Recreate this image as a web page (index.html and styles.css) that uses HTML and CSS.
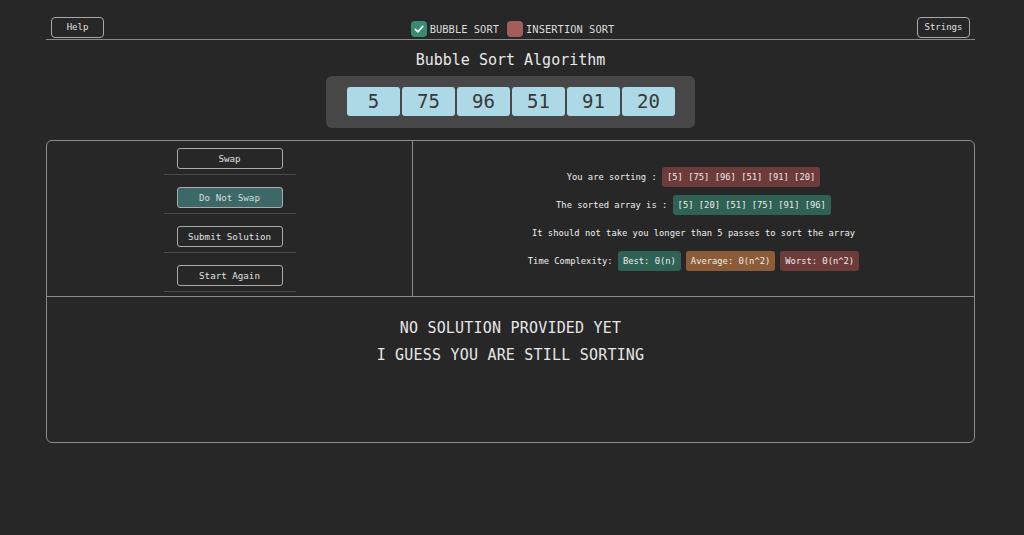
FILE: index.html
```html
<!DOCTYPE html>
<html lang="en">
<head>
<meta charset="utf-8">
<title>Bubble Sort Algorithm</title>
<link rel="stylesheet" href="styles.css">
</head>
<body>
<div class="page">
  <header class="topbar">
    <button class="btn-small">Help</button>
    <div class="toggles">
      <span class="check check-on"><svg viewBox="0 0 16 16" width="16" height="16"><path d="M4.3 8.3 L7 10.8 L11.8 5.4" fill="none" stroke="#fff" stroke-width="1.6" stroke-linecap="round" stroke-linejoin="round"/></svg></span>
      <span class="toggle-label">BUBBLE SORT</span>
      <span class="check check-off"></span>
      <span class="toggle-label">INSERTION SORT</span>
    </div>
    <button class="btn-small">Strings</button>
  </header>

  <h1 class="title">Bubble Sort Algorithm</h1>

  <div class="array-wrap">
    <div class="array">
      <div class="cell">5</div>
      <div class="cell">75</div>
      <div class="cell">96</div>
      <div class="cell">51</div>
      <div class="cell">91</div>
      <div class="cell">20</div>
    </div>
  </div>

  <section class="panel">
    <div class="panel-top">
      <div class="controls">
        <div class="ctrl"><button class="btn">Swap</button></div>
        <div class="ctrl"><button class="btn btn-active">Do Not Swap</button></div>
        <div class="ctrl"><button class="btn">Submit Solution</button></div>
        <div class="ctrl"><button class="btn">Start Again</button></div>
      </div>
      <div class="info">
        <div class="row">You are sorting : <span class="badge red">[5] [75] [96] [51] [91] [20]</span></div>
        <div class="row">The sorted array is : <span class="badge green">[5] [20] [51] [75] [91] [96]</span></div>
        <div class="row">It should not take you longer than 5 passes to sort the array</div>
        <div class="row">Time Complexity: <span class="badge green">Best: Θ(n)</span><span class="badge orange">Average: Θ(n^2)</span><span class="badge red">Worst: Θ(n^2)</span></div>
      </div>
    </div>
    <div class="panel-bottom">
      <p class="msg">NO SOLUTION PROVIDED YET</p>
      <p class="msg">I GUESS YOU ARE STILL SORTING</p>
    </div>
  </section>
</div>
</body>
</html>
```

FILE: styles.css
```css
* { box-sizing: border-box; }
html, body {
  margin: 0;
  padding: 0;
  background: #272727;
  color: #e4e4e4;
  font-family: "DejaVu Sans Mono", "Liberation Mono", monospace;
}
.page {
  width: 929px;
  margin-left: 46px;
}
.topbar {
  display: flex;
  justify-content: space-between;
  align-items: flex-end;
  padding: 17px 5px 1px 5px;
  border-bottom: 1px solid #8a8a8a;
}
.btn-small {
  font-family: inherit;
  font-size: 9px;
  color: #e0e0e0;
  background: transparent;
  border: 1px solid #a9a9a9;
  border-radius: 4px;
  width: 53px;
  height: 21px;
  padding: 0;
  line-height: 19px;
  text-align: center;
}
.toggles {
  display: flex;
  align-items: center;
  padding-bottom: 1px;
  margin-left: 4px;
}
.check {
  width: 16px;
  height: 16px;
  border-radius: 4px;
  display: inline-block;
}
.check svg { display: block; }
.check-on { background: #3b8b73; }
.check-off { background: #a25e5a; margin-left: 8px; }
.toggle-label {
  font-size: 10.4px;
  color: #dcdcdc;
  margin-left: 3px;
  letter-spacing: 0.05px;
}
.title {
  font-weight: normal;
  font-size: 15px;
  text-align: center;
  margin: 11px 0 0 0;
  line-height: 19px;
  color: #e8e8e8;
  letter-spacing: 0;
}
.array-wrap {
  display: flex;
  justify-content: center;
  margin-top: 6px;
}
.array {
  display: flex;
  gap: 2px;
  background: #474747;
  border-radius: 6px;
  padding: 11px 20px 12px 21px;
}
.cell {
  width: 53px;
  height: 29px;
  background: #add8e6;
  color: #383838;
  border-radius: 3px;
  font-size: 19px;
  line-height: 29px;
  text-align: center;
}
.panel {
  margin-top: 12px;
  border: 1px solid #8c8c8c;
  border-radius: 6px;
  height: 303px;
  display: flex;
  flex-direction: column;
}
.panel-top {
  display: flex;
  height: 156px;
  border-bottom: 1px solid #8c8c8c;
}
.controls {
  width: 366px;
  border-right: 1px solid #8c8c8c;
  display: flex;
  flex-direction: column;
  align-items: center;
  padding-top: 7px;
  gap: 12px;
}
.ctrl {
  width: 132px;
  display: flex;
  justify-content: center;
  padding-bottom: 5px;
  border-bottom: 1px solid #4a4a4a;
}
.btn {
  font-family: inherit;
  font-size: 9.2px;
  color: #e0e0e0;
  background: transparent;
  border: 1px solid #ababab;
  border-radius: 3px;
  width: 106px;
  height: 21px;
  padding: 0;
  line-height: 19px;
}
.btn-active {
  background: #3d6868;
  color: #d2dede;
}
.info {
  flex: 1;
  display: flex;
  flex-direction: column;
  justify-content: center;
  align-items: center;
  gap: 8px;
  padding-top: 1px;
}
.row {
  font-size: 8.8px;
  height: 20px;
  line-height: 20px;
  color: #f0f0f0;
  display: flex;
  align-items: center;
  white-space: pre;
}
.badge {
  display: inline-block;
  height: 20px;
  line-height: 20px;
  padding: 0 5px;
  border-radius: 3px;
  margin-left: 5px;
  color: #ececec;
}
.row .badge:first-child { margin-left: 0; }
.red { background: #6c3b3a; }
.green { background: #2f6155; }
.orange { background: #8c5b37; }
.panel-bottom {
  flex: 1;
  padding-top: 18px;
  text-align: center;
}
.msg {
  margin: 0;
  font-size: 15px;
  letter-spacing: 0.2px;
  line-height: 27px;
  color: #e6e6e6;
}
```
